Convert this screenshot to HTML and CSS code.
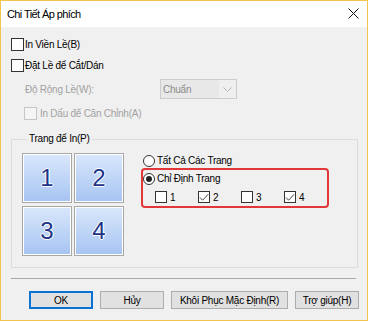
FILE: index.html
```html
<!DOCTYPE html>
<html lang="vi">
<head>
	<meta charset="UTF-8">
	<title>Chi Tiết Áp phích</title>
	<link rel="stylesheet" href="styles.css">
</head>
<body>
	<div class="dialog">
		<div class="titlebar">
			<span class="title">Chi Tiết Áp phích</span>
			<svg class="close" width="11" height="11" viewBox="0 0 11 11"><path d="M0.5 0.5 L10.5 10.5 M10.5 0.5 L0.5 10.5" stroke="#111" stroke-width="1" fill="none"/></svg>
		</div>

		<div class="content">
			<div class="opt"><span class="cb"></span><span>In Viền Lề(B)</span></div>
			<div class="opt"><span class="cb"></span><span>Đặt Lề để Cắt/Dán</span></div>

			<div class="width-row">
				<span class="lbl">Độ Rộng Lề(W):</span>
				<div class="combo">
					<span class="combo-text">Chuẩn</span>
					<span class="combo-arrow"><svg width="9" height="5" viewBox="0 0 9 5"><path d="M0.5 0.5 L4.5 4.5 L8.5 0.5" stroke="#b4b4b4" fill="none"/></svg></span>
				</div>
			</div>

			<div class="opt opt-sub disabled"><span class="cb"></span><span>In Dấu để Căn Chỉnh(A)</span></div>

			<fieldset class="pages">
				<legend>Trang để In(P)</legend>
				<div class="pages-inner">
					<div class="tiles">
						<div class="tile">1</div>
						<div class="tile">2</div>
						<div class="tile">3</div>
						<div class="tile">4</div>
					</div>
					<div class="choices">
						<div class="radio-row"><span class="rb"></span><span>Tất Cả Các Trang</span></div>
						<div class="specify">
							<div class="radio-row"><span class="rb on"></span><span>Chỉ Định Trang</span></div>
							<div class="page-checks">
								<div class="pc"><span class="cb"></span><span>1</span></div>
								<div class="pc"><span class="cb checked"><svg width="11" height="11" viewBox="0 0 11 11"><path d="M1 5.5 L4 8.5 L10 2" stroke="#333" fill="none"/></svg></span><span>2</span></div>
								<div class="pc"><span class="cb"></span><span>3</span></div>
								<div class="pc"><span class="cb checked"><svg width="11" height="11" viewBox="0 0 11 11"><path d="M1 5.5 L4 8.5 L10 2" stroke="#333" fill="none"/></svg></span><span>4</span></div>
							</div>
						</div>
					</div>
				</div>
			</fieldset>

			<div class="sep"></div>

			<div class="buttons">
				<button class="btn btn-default">OK</button>
				<button class="btn">Hủy</button>
				<button class="btn btn-wide">Khôi Phục Mặc Định(R)</button>
				<button class="btn">Trợ giúp(H)</button>
			</div>
		</div>
	</div>
</body>
</html>
```

FILE: styles.css
```css
*{
	margin: 0;
	padding: 0;
	box-sizing: border-box;
}
body {
	background: #f0f0f0;
	font-family: "Liberation Sans", Arial, sans-serif;
	font-size: 10px;
	letter-spacing: -0.25px;
	color: #000;
}
.dialog {
	width: 368px;
	height: 321px;
	border: 1px solid #f2c44c;
	display: flex;
	flex-direction: column;
	background: #f0f0f0;
}
.titlebar {
	height: 26px;
	background: #fff;
	display: flex;
	align-items: center;
	justify-content: space-between;
	padding: 0 8px 0 6px;
}
.title {
	font-size: 11px;
	letter-spacing: -0.6px;
}
.close {
	margin-top: -1px;
}
.content {
	flex: 1;
	padding: 7px 8px 0 10px;
}

/* checkboxes */
.opt {
	height: 21px;
	display: flex;
	align-items: center;
}
.cb {
	width: 13px;
	height: 13px;
	border: 1px solid #333;
	background: #fff;
	margin-right: 1px;
	display: inline-flex;
	align-items: center;
	justify-content: center;
	flex: none;
}
.opt-sub {
	margin-top: 4px;
	margin-left: 13px;
}
.opt-sub .cb {
	margin-right: 3px;
}
.disabled {
	color: #a2a2a2;
}
.disabled .cb {
	border-color: #c6c6c6;
	background: #f5f5f5;
}

/* combo row */
.width-row {
	margin-top: 3px;
	height: 20px;
	display: flex;
	align-items: center;
	color: #a2a2a2;
}
.lbl {
	width: 149px;
	padding-left: 14px;
}
.combo {
	width: 77px;
	height: 20px;
	border: 1px solid #cccccc;
	background: #e8e8e8;
	display: flex;
	align-items: center;
}
.combo-text {
	flex: 1;
	padding-left: 2px;
	color: #8a8a8a;
}
.combo-arrow {
	width: 17px;
	height: 18px;
	background: #efefef;
	display: flex;
	align-items: center;
	justify-content: center;
}

/* page group */
.pages {
	margin-top: 8px;
	border: 1px solid #dcdcdc;
	padding: 7px 0 11px 10px;
	width: 347px;
}
.pages legend {
	margin-left: 5px;
	padding: 0 2px;
	line-height: 14px;
}
.pages-inner {
	display: flex;
	gap: 17px;
}
.tiles {
	display: grid;
	grid-template-columns: 50px 50px;
	grid-template-rows: 50px 50px;
	column-gap: 2px;
	row-gap: 3px;
}
.tile {
	border: 1px solid #a8a8a8;
	box-shadow: inset 0 0 0 1px #fff;
	background: linear-gradient(#d9e7fb, #a6c4f2);
	display: flex;
	align-items: center;
	justify-content: center;
	font-size: 24px;
	letter-spacing: 0;
	color: #1d3587;
	text-shadow: 1px 0 0 #fff, -1px 0 0 #fff, 0 1px 0 #fff, 0 -1px 0 #fff;
}
.choices {
	width: 188px;
}
.radio-row {
	height: 15px;
	display: flex;
	align-items: center;
	padding-left: 2px;
}
.rb {
	width: 12px;
	height: 12px;
	border: 1px solid #333;
	border-radius: 50%;
	background: #fff;
	margin-right: 2px;
	display: inline-flex;
	align-items: center;
	justify-content: center;
	flex: none;
}
.rb.on::after {
	content: "";
	width: 6px;
	height: 6px;
	border-radius: 50%;
	background: #222;
}
.specify {
	border: 2px solid #e2383a;
	border-radius: 4px;
	height: 40px;
	padding-top: 1px;
}
.specify .radio-row {
	padding-left: 0;
}
.page-checks {
	display: flex;
	margin-top: 3px;
	padding-left: 12px;
	height: 16px;
	align-items: center;
}
.pc {
	width: 50px;
	display: flex;
	align-items: center;
}
.pc .cb {
	width: 12px;
	height: 12px;
	margin-right: 3px;
}

.sep {
	margin-top: 10px;
	width: 345px;
	border-top: 1px solid #a8a8a8;
}

.buttons {
	display: flex;
	justify-content: flex-end;
	gap: 7px;
	margin-top: 12px;
}
.btn {
	width: 64px;
	height: 18px;
	border: 1px solid #adadad;
	background: #e1e1e1;
	font-family: inherit;
	font-size: 10px;
	letter-spacing: -0.25px;
	color: #000;
}
.btn-wide {
	width: 117px;
}
.btn-default {
	border: 2px solid #0a74d4;
}
```
